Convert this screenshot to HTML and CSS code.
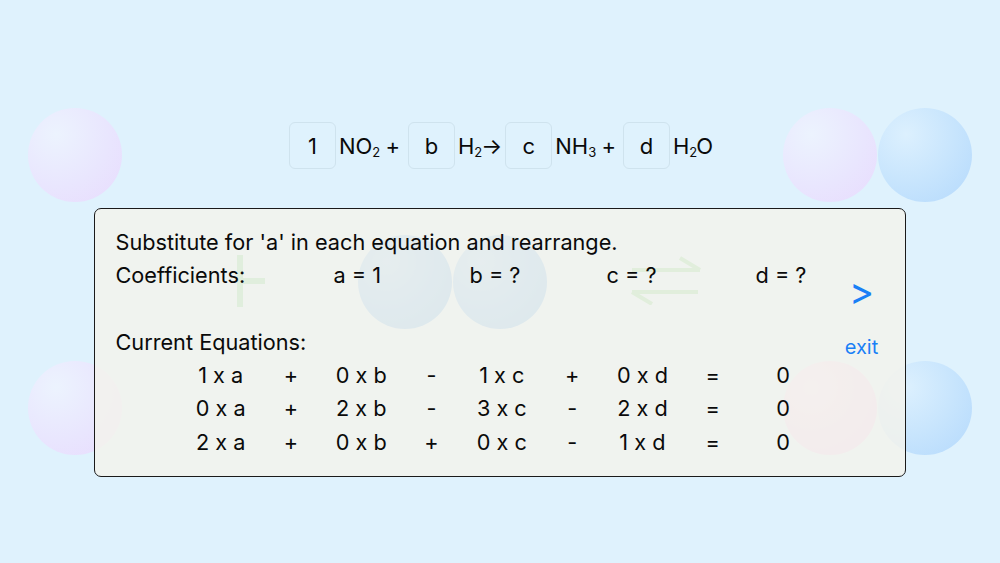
FILE: index.html
```html
<!DOCTYPE html>
<html>
<head>
<meta charset="utf-8">
<link rel="stylesheet" href="styles.css">
</head>
<body>
<div class="scene">
  <div class="decor">
    <div class="sphere lav" style="left:28px;top:108px"></div>
    <div class="sphere lav" style="left:783px;top:108px"></div>
    <div class="sphere blue" style="left:878px;top:108px"></div>
    <div class="sphere lav" style="left:28px;top:361px"></div>
    <div class="sphere pink" style="left:783px;top:361px"></div>
    <div class="sphere blue" style="left:878px;top:361px"></div>
    <div class="sphere deep" style="left:358px;top:235px"></div>
    <div class="sphere deep" style="left:453px;top:235px"></div>
    <svg class="plus" width="40" height="60" viewBox="0 0 40 60" style="left:237px;top:255px">
      <rect x="0" y="0" width="6" height="52" fill="#84d899"/>
      <rect x="0" y="23" width="28" height="6" fill="#84d899"/>
    </svg>
    <svg class="arrows" width="80" height="50" viewBox="0 0 80 50" style="left:628px;top:255px">
      <path d="M4 15 H72 M52 3 L72 15" stroke="#8cd896" stroke-width="4" fill="none"/>
      <path d="M4 37 H70 M4 37 L24 49" stroke="#8cd896" stroke-width="4" fill="none"/>
    </svg>
  </div>

  <main class="page">
    <div class="reaction">
      <div class="coef">1</div><div class="mol gap-l">NO<sub>2</sub> +</div>
      <div class="coef">b</div><div class="mol gap-s">H<sub>2</sub>→</div>
      <div class="coef">c</div><div class="mol gap-m">NH<sub>3</sub> +</div>
      <div class="coef">d</div><div class="mol">H<sub>2</sub>O</div>
    </div>

    <section class="panel">
      <div class="content">
        <div class="line">Substitute for 'a' in each equation and rearrange.</div>
        <div class="line coeffs">
          <span>Coefficients:</span><span>a = 1</span><span>b = ?</span><span>c = ?</span><span>d = ?</span>
        </div>
        <div class="line blank"></div>
        <div class="line">Current Equations:</div>
        <div class="eqs">
          <span>1 x a</span><span>+</span><span>0 x b</span><span>-</span><span>1 x c</span><span>+</span><span>0 x d</span><span>=</span><span>0</span>
          <span>0 x a</span><span>+</span><span>2 x b</span><span>-</span><span>3 x c</span><span>-</span><span>2 x d</span><span>=</span><span>0</span>
          <span>2 x a</span><span>+</span><span>0 x b</span><span>+</span><span>0 x c</span><span>-</span><span>1 x d</span><span>=</span><span>0</span>
        </div>
      </div>
      <div class="side">
        <div class="next">&gt;</div>
        <div class="exit">exit</div>
      </div>
    </section>
  </main>
</div>
</body>
</html>
```

FILE: styles.css
```css
html, body {
  margin: 0;
  padding: 0;
}
body {
  width: 1000px;
  height: 563px;
  overflow: hidden;
  background: #dff2fd;
  font-family: Inter, "Noto Sans", "Liberation Sans", sans-serif;
  color: #0a0a0a;
}
.scene {
  position: relative;
  width: 1000px;
  height: 563px;
}
.decor {
  position: absolute;
  inset: 0;
  z-index: 0;
}
.sphere {
  position: absolute;
  width: 94px;
  height: 94px;
  border-radius: 50%;
}
.sphere.lav {
  background: radial-gradient(circle at 30% 28%, #ecf3fe 0%, #e9e6fe 55%, #e8dbfd 100%);
}
.sphere.pink {
  background: radial-gradient(circle at 30% 28%, #f2e2f8 0%, #eed0f2 60%, #ecc6ee 100%);
}
.sphere.blue {
  background: radial-gradient(circle at 30% 28%, #dcf0fe 0%, #c8e5fd 50%, #b4d9fc 100%);
}
.sphere.deep {
  background: radial-gradient(circle at 30% 28%, #a6d3fb 0%, #86c2f6 55%, #72b4f2 100%);
}
.plus, .arrows {
  position: absolute;
}
.page {
  position: relative;
  z-index: 1;
  display: flex;
  flex-direction: column;
  align-items: center;
  padding-top: 122px;
}
.reaction {
  display: flex;
  align-items: center;
  gap: 3px;
  height: 47px;
  font-size: 22px;
  margin-left: 2px;
}
.coef {
  width: 45px;
  height: 45px;
  border: 1px solid #cfe3ee;
  border-radius: 6px;
  display: flex;
  align-items: center;
  justify-content: center;
  font-size: 22px;
}
.mol {
  white-space: nowrap;
}
.mol.gap-l { margin-right: 5px; }
.mol.gap-s { margin-right: 0; }
.mol.gap-m { margin-right: 4px; }
.mol sub {
  font-size: 13px;
  vertical-align: -3px;
  line-height: 0;
  margin-right: -1px;
}
.panel {
  margin-top: 39px;
  margin-left: -1px;
  width: 810px;
  height: 267px;
  border: 1.5px solid #1a1a1a;
  border-radius: 7px;
  background: rgba(244, 243, 236, 0.82);
  display: flex;
  box-sizing: content-box;
}
.content {
  flex: 1;
  padding: 17px 0 0 21px;
  font-size: 21.7px;
}
.line {
  height: 33.3px;
  line-height: 33.3px;
  white-space: nowrap;
}
.coeffs {
  display: grid;
  grid-template-columns: 218px 136px 137px 149px auto;
}
.eqs {
  display: grid;
  grid-template-columns: repeat(9, 70.3px);
  grid-auto-rows: 33.3px;
  line-height: 33.3px;
  margin-left: 70px;
  text-align: center;
}
.side {
  width: 86px;
  display: flex;
  flex-direction: column;
  align-items: center;
  color: #1a7ff6;
  padding-top: 62px;
}
.next {
  font-size: 38px;
  line-height: 40px;
  height: 64px;
}
.exit {
  font-size: 20px;
  line-height: 24px;
}
```
